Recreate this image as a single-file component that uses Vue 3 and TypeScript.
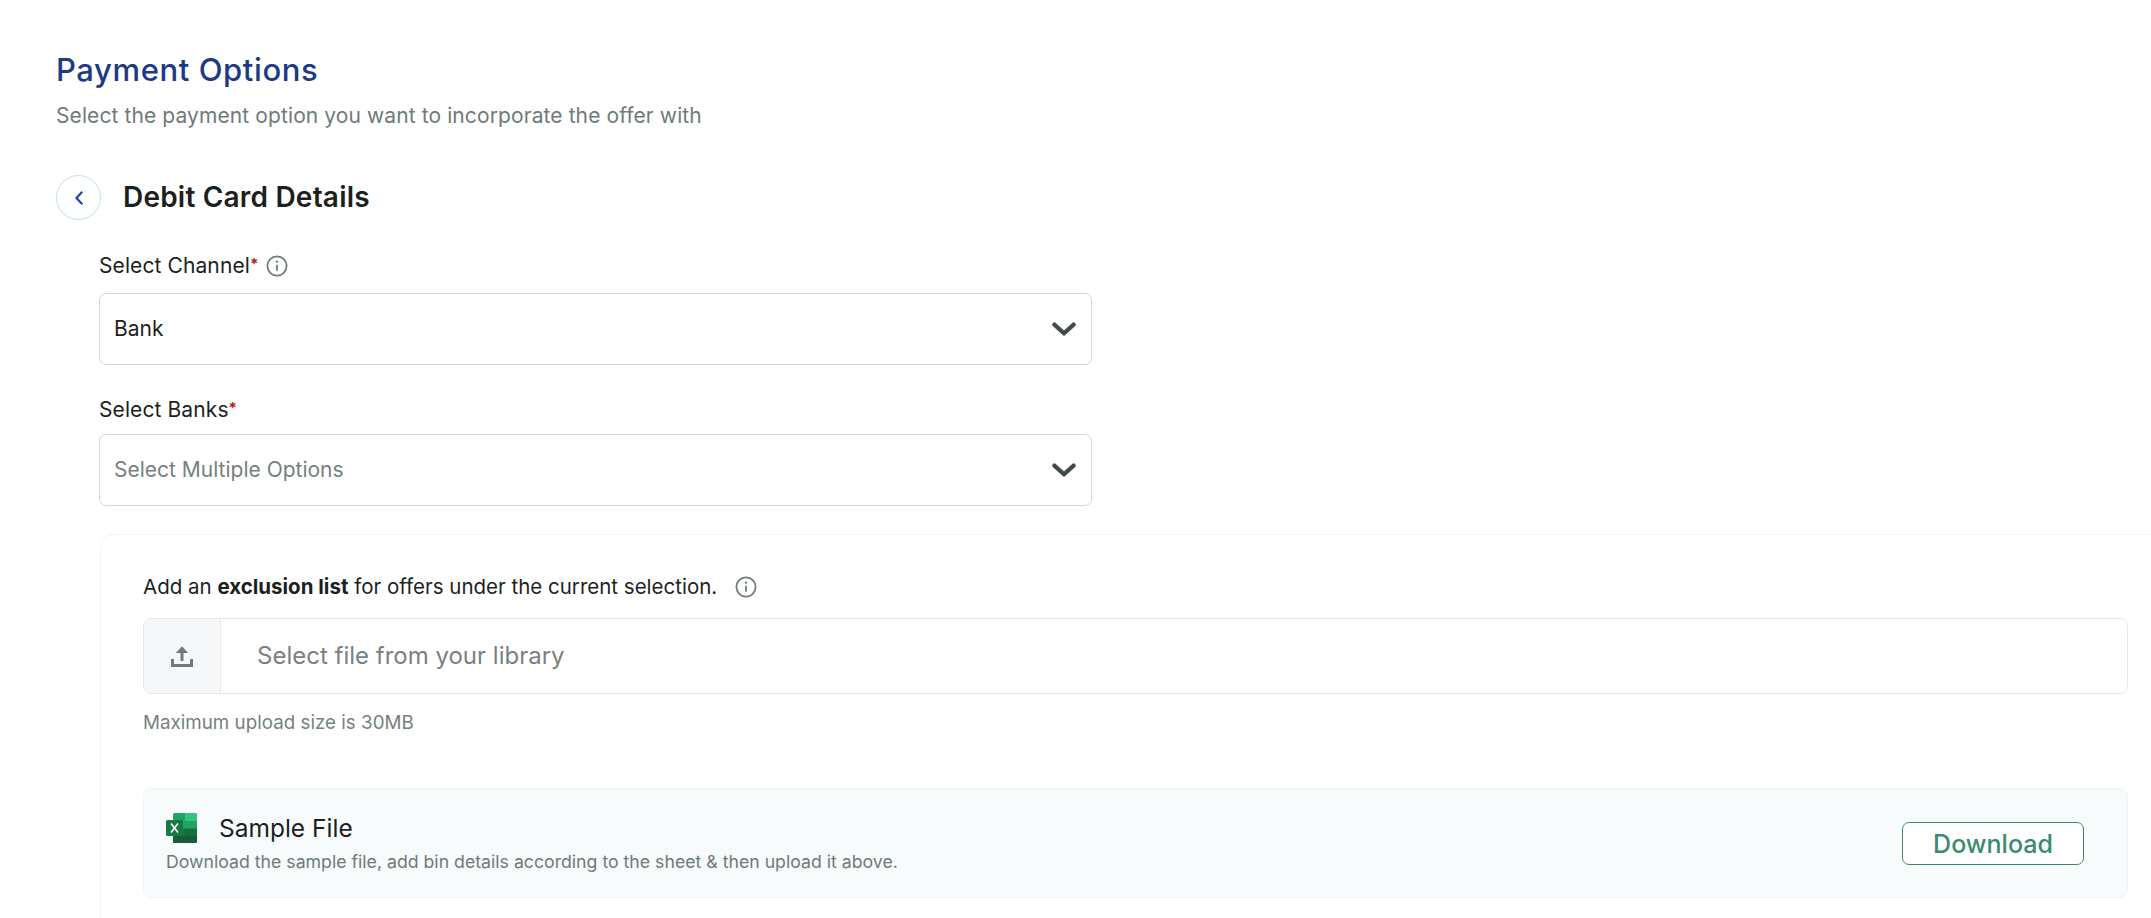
<script setup lang="ts">
const fields = [
  { id: 'channel', label: 'Select Channel', info: true, value: 'Bank', placeholder: false },
  { id: 'banks', label: 'Select Banks', info: false, value: 'Select Multiple Options', placeholder: true },
]
</script>

<template>
  <main class="page">
    <h1 class="title">Payment Options</h1>
    <p class="subtitle">Select the payment option you want to incorporate the offer with</p>

    <div class="back-row">
      <button class="back" type="button" aria-label="Back">
        <svg width="12" height="16" viewBox="0 0 12 16" fill="none">
          <path d="M8.5 2.5 3.5 8l5 5.5" stroke="#2447a5" stroke-width="2.2" stroke-linecap="square" />
        </svg>
      </button>
      <h2 class="heading">Debit Card Details</h2>
    </div>

    <section class="form">
      <div v-for="f in fields" :key="f.id" class="field" :class="f.id">
        <div class="label">
          <span>{{ f.label }}<sup class="req">*</sup></span>
          <svg v-if="f.info" class="info" width="22" height="22" viewBox="0 0 22 22" fill="none">
            <circle cx="11" cy="11" r="9.6" stroke="#6f7d7a" stroke-width="1.8" />
            <path d="M11 9.8v6" stroke="#6f7d7a" stroke-width="1.8" />
            <circle cx="11" cy="6.6" r="1.2" fill="#6f7d7a" />
          </svg>
        </div>
        <div class="select">
          <span :class="{ placeholder: f.placeholder }">{{ f.value }}</span>
          <svg width="24" height="14" viewBox="0 0 24 14" fill="none">
            <path d="M2.4 2.600 12 11.200l9.600-8.600" stroke="#3f4a4a" stroke-width="4.200" stroke-linecap="round" stroke-linejoin="miter" />
          </svg>
        </div>
      </div>

      <div class="card">
        <div class="excl">
          <span>Add an <b>exclusion list</b> for offers under the current selection.</span>
          <svg class="info" width="22" height="22" viewBox="0 0 22 22" fill="none">
            <circle cx="11" cy="11" r="9.6" stroke="#6f7d7a" stroke-width="1.8" />
            <path d="M11 9.8v6" stroke="#6f7d7a" stroke-width="1.8" />
            <circle cx="11" cy="6.6" r="1.2" fill="#6f7d7a" />
          </svg>
        </div>

        <div class="upload">
          <div class="upload-icon">
            <svg width="22" height="22" viewBox="0 0 22 22" fill="none">
              <path d="M11 16V5" stroke="#75797e" stroke-width="3" />
              <path d="M4.800 8 11 1.200 17.200 8z" fill="#75797e" />
              <path d="M1.500 14v6.500h19V14" stroke="#75797e" stroke-width="3" />
            </svg>
          </div>
          <span class="upload-text">Select file from your library</span>
        </div>
        <p class="hint">Maximum upload size is 30MB</p>

        <div class="sample">
          <div class="sample-info">
            <div class="sample-title">
              <svg width="31" height="30" viewBox="0 0 31 30">
                <rect x="7" y="0" width="24" height="30" rx="1.5" fill="#21a366" />
                <path d="M19 0h10.500A1.500 1.500 0 0 1 31 1.500V8H19z" fill="#33c481" />
                <path d="M7 8h12v7.500H7z" fill="#21a366" />
                <path d="M19 8h12v7.500H19z" fill="#21a366" />
                <path d="M7 15.500h12V23H7z" fill="#107c41" />
                <path d="M19 15.500h12V23H19z" fill="#185c37" opacity=".8" />
                <path d="M7 23h24v5.500a1.500 1.500 0 0 1-1.500 1.500h-21A1.500 1.500 0 0 1 7 28.500z" fill="#185c37" />
                <rect x="0" y="7" width="17" height="16" rx="1.500" fill="#127a42" />
                <path d="M5 10.500 12 19.500M12 10.500 5 19.500" stroke="#fff" stroke-width="1.700" />
              </svg>
              <span>Sample File</span>
            </div>
            <p class="sample-desc">Download the sample file, add bin details according to the sheet &amp; then upload it above.</p>
          </div>
          <button class="download" type="button">Download</button>
        </div>
      </div>
    </section>
  </main>
</template>

<style>
html, body { margin: 0; background: #fff; overflow: hidden; height: 918px; }
</style>

<style scoped>
.page {
  box-sizing: border-box;
  width: 2151px;
  height: 918px;
  padding: 52px 0 0 56px;
  overflow: hidden;
  font-family: "Inter", "Lato", sans-serif;
  font-variant-ligatures: none;
  color: #1d1f1f;
}
.title {
  margin: 0;
  font-size: 31px;
  line-height: 36px;
  font-weight: 500;
  letter-spacing: 0.6px;
  color: #1c3a85;
}
.subtitle {
  margin: 15px 0 0;
  font-size: 21px;
  line-height: 26px;
  letter-spacing: 0.1px;
  color: #6f7a78;
}
.back-row {
  display: flex;
  align-items: center;
  gap: 22px;
  margin-top: 46px;
}
.back {
  box-sizing: border-box;
  display: flex;
  align-items: center;
  justify-content: center;
  width: 45px;
  height: 45px;
  padding: 0;
  border: 1px solid #bcdfe9;
  border-radius: 50%;
  background: #fff;
}
.heading {
  margin: 0 0 2px;
  font-size: 28px;
  line-height: 36px;
  font-weight: 600;
  letter-spacing: 0.2px;
  color: #1d1f1f;
}
.form { padding-left: 43px; }
.field.channel { margin-top: 32px; }
.field.banks { margin-top: 31px; }
.label {
  display: flex;
  align-items: center;
  gap: 8px;
  height: 28px;
  font-size: 21px;
  line-height: 28px;
  letter-spacing: 0.1px;
}
.banks .label { margin-bottom: 10px; }
.channel .label { margin-bottom: 13px; }
.req {
  color: #b3201f;
  font-size: 15px;
  line-height: 0;
  vertical-align: 4px;
  font-weight: 700;
}
.select {
  box-sizing: border-box;
  display: flex;
  align-items: center;
  justify-content: space-between;
  width: 993px;
  height: 72px;
  padding: 0 15px 0 14px;
  border: 1.500px solid #cfd8d8;
  border-radius: 7px;
  font-size: 21px;
  line-height: 26px;
}
.placeholder { color: #777f7e; }
.card {
  box-sizing: border-box;
  width: 2100px;
  margin: 28px 0 0 1px;
  padding: 38px 0 40px 42px;
  border: 1px solid #f0f5f6;
  border-radius: 14px;
}
.excl {
  display: flex;
  align-items: center;
  gap: 18px;
  height: 28px;
  font-size: 20.500px;
  line-height: 28px;
}
.excl b { font-weight: 700; }
.upload {
  box-sizing: border-box;
  display: flex;
  align-items: center;
  width: 1985px;
  height: 76px;
  margin-top: 17px;
  border: 1.500px solid #e6e7ec;
  border-radius: 8px;
  overflow: hidden;
}
.upload-icon {
  box-sizing: border-box;
  display: flex;
  align-items: center;
  justify-content: center;
  width: 77px;
  height: 100%;
  background: #f6f7f9;
  border-right: 1.500px solid #e6e7ec;
}
.upload-text {
  margin-left: 36px;
  font-size: 24px;
  line-height: 30px;
  color: #7b7f82;
}
.hint {
  margin: 16px 0 0;
  font-size: 18.800px;
  line-height: 26px;
  color: #777f7e;
}
.sample {
  box-sizing: border-box;
  display: flex;
  align-items: center;
  justify-content: space-between;
  width: 1985px;
  height: 110px;
  margin-top: 52px;
  padding: 0 43px 0 22px;
  background: #f7fbfc;
  border: 1px solid #f0f6f7;
  border-radius: 8px;
}
.sample-title {
  display: flex;
  align-items: center;
  gap: 22px;
  height: 34px;
  font-size: 24.500px;
  line-height: 34px;
}
.sample-desc {
  margin: 4px 0 0;
  font-size: 17.700px;
  line-height: 26px;
  color: #6f7a78;
}
.download {
  box-sizing: border-box;
  width: 182px;
  height: 43px;
  padding: 1px 0 0;
  border: 1.500px solid #3a8a6e;
  border-radius: 7px;
  background: #fff;
  color: #3a8a6e;
  font-family: inherit;
  font-size: 25px;
  font-weight: 500;
}
</style>
